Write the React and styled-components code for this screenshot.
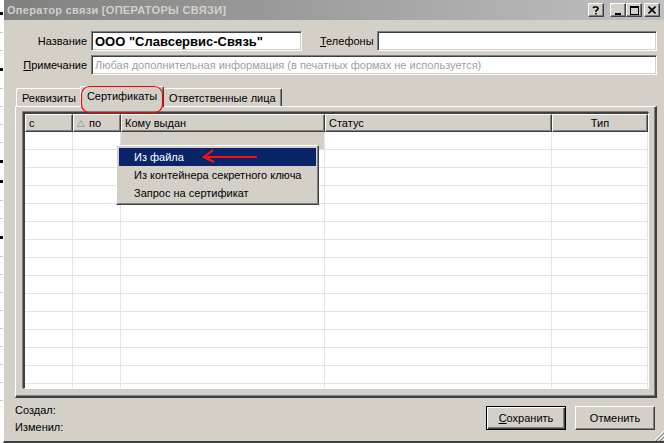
import React from "react";
import styled, { createGlobalStyle, css } from "styled-components";

const GlobalStyle = createGlobalStyle`
  html, body { margin: 0; padding: 0; background: #ffffff; }
  body { font-family: "Liberation Sans", Arial, sans-serif; font-size: 11px; color: #000; }
`;

const face = "#d4d0c8";

const raised = css`
  border-top: 1px solid #ffffff;
  border-left: 1px solid #ffffff;
  border-right: 1px solid #404040;
  border-bottom: 1px solid #404040;
  box-shadow: inset -1px -1px 0 #808080;
`;

const sunken = css`
  border-top: 1px solid #808080;
  border-left: 1px solid #808080;
  border-right: 1px solid #ffffff;
  border-bottom: 1px solid #ffffff;
  box-shadow: inset 1px 1px 0 #404040, inset -1px -1px 0 ${face};
`;

const Screen = styled.div`
  position: relative;
  width: 664px;
  height: 443px;
  overflow: hidden;
  display: flex;
`;

const BackStrip = styled.div`
  width: 3px;
  flex: none;
  background: #ffffff;
  display: flex;
  flex-direction: column;
  gap: 17px;
  padding-top: 12px;
`;

const BackMark = styled.span`
  display: block;
  flex: none;
  width: 3px;
  height: ${(p) => (p.$dark ? 3 : 1)}px;
  background: ${(p) => (p.$dark ? "#000000" : "#c8c8c8")};
`;

const Dialog = styled.div`
  flex: 1;
  display: flex;
  flex-direction: column;
  background: ${face};
  border-left: 1px solid #ffffff;
  border-right: 2px solid #404040;
  border-bottom: 2px solid #404040;
  position: relative;
  min-height: 0;
  & > * { flex-shrink: 0; }
`;

const TitleBar = styled.div`
  height: 20px;
  margin-right: 2px;
  display: flex;
  align-items: center;
  background: linear-gradient(to right, #808080, #c0c0c0);
  padding: 0 4px 0 3px;
`;

const Title = styled.div`
  flex: 1;
  font-weight: bold;
  font-size: 11px;
  color: ${face};
  letter-spacing: 0.3px;
`;

const CaptionButton = styled.div`
  width: 16px;
  height: 14px;
  box-sizing: border-box;
  background: ${face};
  ${raised};
  display: flex;
  align-items: center;
  justify-content: center;
  margin-left: ${(p) => p.$gap || 0}px;
`;

const Row = styled.div`
  display: flex;
  align-items: center;
  height: 20px;
  margin-top: ${(p) => p.$top}px;
  margin-right: 9px;
`;

const Label = styled.div`
  width: ${(p) => (p.$width ? `${p.$width}px` : "auto")};
  text-align: right;
  padding-right: ${(p) => p.$pr ?? 4}px;
  margin-left: ${(p) => p.$ml || 0}px;
  white-space: nowrap;
  u { text-decoration: underline; }
`;

const Field = styled.div`
  box-sizing: border-box;
  height: 20px;
  width: ${(p) => (p.$width ? `${p.$width}px` : "auto")};
  flex: ${(p) => (p.$width ? "none" : 1)};
  background: #ffffff;
  ${sunken};
  padding: 0 3px;
  display: flex;
  align-items: center;
  font-size: ${(p) => (p.$bold ? "13px" : "11px")};
  font-weight: ${(p) => (p.$bold ? "bold" : "normal")};
  color: ${(p) => (p.$hint ? "#a0a0a0" : "#000")};
  white-space: nowrap;
  overflow: hidden;
`;

const TabStrip = styled.div`
  margin: 12px 0 0 12px;
  height: 19px;
  display: flex;
  align-items: flex-end;
  position: relative;
  z-index: 2;
`;

const Tab = styled.div`
  box-sizing: border-box;
  height: ${(p) => (p.$active ? 21 : 18)}px;
  margin: ${(p) => (p.$active ? "0 -1px -1px -2px" : "0")};
  padding: 0 ${(p) => (p.$active ? 6 : 5)}px;
  background: ${face};
  border-top: 1px solid #ffffff;
  border-left: 1px solid #ffffff;
  border-right: 1px solid #404040;
  box-shadow: inset -1px 0 0 #808080;
  border-radius: 2px 2px 0 0;
  display: flex;
  align-items: center;
  padding-bottom: ${(p) => (p.$active ? 3 : 0)}px;
  position: relative;
  z-index: ${(p) => (p.$active ? 2 : 1)};
`;

const Panel = styled.div`
  flex: 1 1 auto !important;
  min-height: 0;
  margin: 0 9px 0 11px;
  border-top: 1px solid #ffffff;
  border-left: 1px solid #ffffff;
  border-right: 2px solid #404040;
  border-bottom: 2px solid #404040;
  box-shadow: inset -1px -1px 0 #808080;
  padding: 5px 6px 7px 7px;
  display: flex;
`;

const Grid = styled.div`
  flex: 1;
  position: relative;
  background: #ffffff;
  border-top: 2px solid #404040;
  border-left: 2px solid #404040;
  border-right: 1px solid #ffffff;
  border-bottom: 1px solid #ffffff;
  box-shadow: -1px -1px 0 #808080;
  overflow: hidden;
`;

const GridRow = styled.div`
  display: flex;
  height: 18px;
  box-sizing: border-box;
  border-bottom: ${(p) => (p.$header ? "none" : "1px solid #e4e4e4")};
`;

const HeadCell = styled.div`
  box-sizing: border-box;
  width: ${(p) => p.$w}px;
  flex: none;
  height: 18px;
  background: ${face};
  ${raised};
  padding: 0 3px;
  display: flex;
  align-items: center;
  justify-content: ${(p) => (p.$center ? "center" : "flex-start")};
  gap: 4px;
`;

const Cell = styled.div`
  box-sizing: border-box;
  width: ${(p) => p.$w}px;
  flex: none;
  border-right: 1px solid #e4e4e4;
  background: ${(p) => (p.$selected ? face : "#ffffff")};
`;

const Menu = styled.div`
  position: absolute;
  left: 91px;
  top: 31px;
  width: 203px;
  box-sizing: border-box;
  background: ${face};
  ${raised};
  padding: 2px;
  z-index: 3;
`;

const MenuItem = styled.div`
  height: 18px;
  display: flex;
  align-items: center;
  padding-left: 15px;
  background: ${(p) => (p.$active ? "#0a246a" : "transparent")};
  color: ${(p) => (p.$active ? "#ffffff" : "#000")};
`;

const Footer = styled.div`
  height: 43px;
  display: flex;
  padding: 6px 11px 0 11px;
  box-sizing: border-box;
`;

const Stamps = styled.div`
  flex: 1;
  display: flex;
  flex-direction: column;
  gap: 5px;
`;

const Button = styled.div`
  box-sizing: border-box;
  width: 80px;
  height: 24px;
  margin-top: 2px;
  margin-left: ${(p) => p.$ml || 0}px;
  background: ${face};
  display: flex;
  align-items: center;
  justify-content: center;
  ${(p) =>
    p.$default
      ? css`
          border: 1px solid #000;
          box-shadow: inset 1px 1px 0 #fff, inset -1px -1px 0 #404040, inset -2px -2px 0 #808080;
        `
      : raised}
  u { text-decoration: underline; }
`;

const Overlay = styled.svg`
  position: absolute;
  left: 0;
  top: 0;
  pointer-events: none;
  z-index: 10;
`;

const Grip = styled.svg`
  position: absolute;
  right: 0;
  bottom: 0;
`;

const columns = [
  { w: 48, title: "с" },
  { w: 48, title: "по", sort: true },
  { w: 204, title: "Кому выдан" },
  { w: 227, title: "Статус" },
  { w: 96, title: "Тип", center: true },
];

const darkMarks = [0, 3, 8, 9, 12];

const App = () => {
  const rows = Array.from({ length: 15 });
  return (
    <>
      <GlobalStyle />
      <Screen>
        <BackStrip>
          {Array.from({ length: 22 }).map((_, i) => (
            <BackMark key={i} $dark={darkMarks.includes(i)} />
          ))}
        </BackStrip>
        <Dialog>
          <TitleBar>
            <Title>Оператор связи [ОПЕРАТОРЫ СВЯЗИ]</Title>
            <CaptionButton>
              <svg width="8" height="9" viewBox="0 0 8 9">
                <path d="M1 2 L2 1 H5 L6 2 V3 L4 5 V6 M4 7 V8.5" stroke="#000" strokeWidth="1.6" fill="none" />
              </svg>
            </CaptionButton>
            <CaptionButton $gap={6}>
              <svg width="8" height="9" viewBox="0 0 8 9">
                <rect x="1" y="7" width="6" height="2" fill="#000" />
              </svg>
            </CaptionButton>
            <CaptionButton>
              <svg width="9" height="9" viewBox="0 0 9 9">
                <rect x="0.5" y="0.5" width="8" height="8" fill="none" stroke="#000" />
                <rect x="0" y="0" width="9" height="2" fill="#000" />
              </svg>
            </CaptionButton>
            <CaptionButton $gap={2}>
              <svg width="8" height="8" viewBox="0 0 8 8">
                <path d="M0.5 0.5 L7.5 7.5 M7.5 0.5 L0.5 7.5" stroke="#000" strokeWidth="1.6" />
              </svg>
            </CaptionButton>
          </TitleBar>

          <Row $top={11}>
            <Label $width={83}>Название</Label>
            <Field $width={211} $bold>
              ООО "Славсервис-Связь"
            </Field>
            <Label $ml={18} $pr={3}>
              <u>Т</u>елефоны
            </Label>
            <Field />
          </Row>
          <Row $top={4}>
            <Label $width={83}>
              <u>П</u>римечание
            </Label>
            <Field $hint>Любая дополнительная информация (в печатных формах не используется)</Field>
          </Row>

          <TabStrip>
            <Tab>Реквизиты</Tab>
            <Tab $active>Сертификаты</Tab>
            <Tab>Ответственные лица</Tab>
          </TabStrip>

          <Panel>
            <Grid>
              <GridRow $header>
                {columns.map((c) => (
                  <HeadCell key={c.title} $w={c.w} $center={c.center}>
                    {c.sort && (
                      <svg width="8" height="7" viewBox="0 0 8 7">
                        <path d="M4 0.5 L7.5 6.5 H0.5 Z" fill="none" stroke="#a0a0a0" />
                      </svg>
                    )}
                    {c.title}
                  </HeadCell>
                ))}
              </GridRow>
              {rows.map((_, i) => (
                <GridRow key={i}>
                  {columns.map((c, j) => (
                    <Cell key={j} $w={c.w} $selected={i === 0 && j === 2} />
                  ))}
                </GridRow>
              ))}
              <Menu>
                <MenuItem $active>Из файла</MenuItem>
                <MenuItem>Из контейнера секретного ключа</MenuItem>
                <MenuItem>Запрос на сертификат</MenuItem>
              </Menu>
            </Grid>
          </Panel>

          <Footer>
            <Stamps>
              <div>Создал:</div>
              <div>Изменил:</div>
            </Stamps>
            <Button $default>
              <span>
                <u>С</u>охранить
              </span>
            </Button>
            <Button $ml={9}>Отменить</Button>
          </Footer>

          <Grip width="12" height="12" viewBox="0 0 12 12">
            <path d="M11 1 L1 11 M11 5 L5 11 M11 9 L9 11" stroke="#ffffff" strokeWidth="1" />
            <path d="M12 2 L2 12 M12 6 L6 12 M12 10 L10 12" stroke="#808080" strokeWidth="1" />
          </Grip>
        </Dialog>

        <Overlay width="664" height="443" viewBox="0 0 664 443">
          <rect x="81.5" y="86.5" width="81" height="26" rx="8" fill="none" stroke="#ff0000" strokeWidth="1.2" />
          <path d="M257 157 H207" stroke="#ff1010" strokeWidth="2" />
          <path d="M213 150 L204 157 L214 162" stroke="#ff1010" strokeWidth="2.2" fill="none" />
        </Overlay>
      </Screen>
    </>
  );
};

export default App;
